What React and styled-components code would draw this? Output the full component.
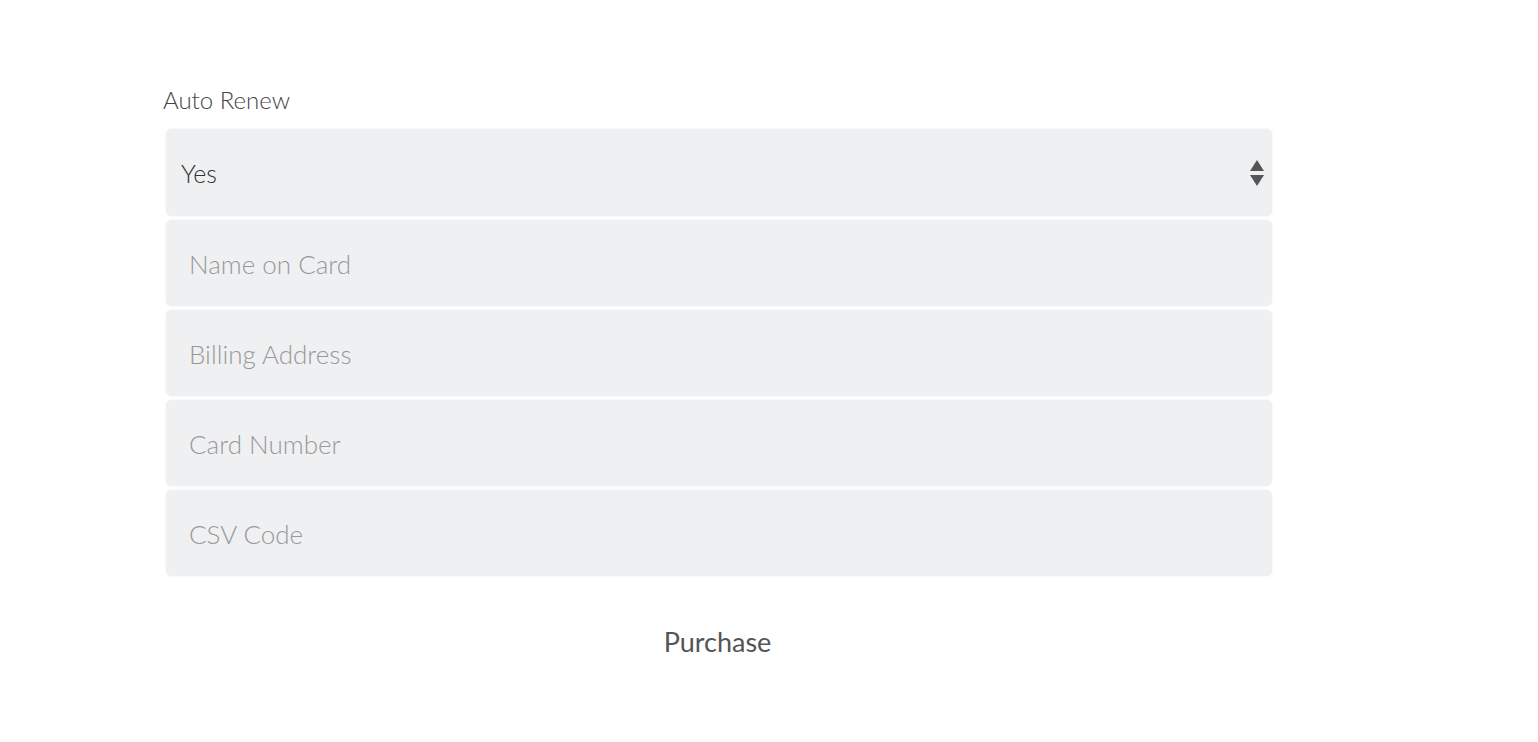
import styled, { createGlobalStyle } from "styled-components";

const GlobalStyle = createGlobalStyle`
  body {
    margin: 0;
    background: #fff;
    font-family: Lato, "Open Sans", sans-serif;
  }
`

const Page = styled.div`
  padding: 84px 0 0 163px;
`

const Form = styled.form`
  width: 1109px;
  display: flex;
  flex-direction: column;
`

const Label = styled.label`
  font-size: 24px;
  font-weight: 300;
  color: #444;
  line-height: 32px;
  margin-bottom: 13px;
`

const Fields = styled.div`
  display: flex;
  flex-direction: column;
  gap: 4px;
  padding-left: 3px;
`

const Box = styled.div`
  height: 87px;
  background: #eff0f2;
  border-radius: 6px;
  box-shadow: 0 0 2px rgba(0, 0, 0, 0.1);
  display: flex;
  align-items: center;
  box-sizing: border-box;
`

const SelectBox = styled(Box)`
  padding: 0 8px 0 15px;
  justify-content: space-between;
  color: #333;
  font-size: 25px;
  font-weight: 300;
`

const Input = styled.input`
  box-sizing: border-box;
  height: 86px;
  border: none;
  outline: none;
  background: #eff0f2;
  border-radius: 6px;
  box-shadow: 0 0 2px rgba(0, 0, 0, 0.1);
  padding: 2px 23px 0;
  font-family: inherit;
  font-size: 26px;
  font-weight: 300;
  color: #333;
  &::placeholder {
    color: #999;
  }
`

const Button = styled.button`
  align-self: center;
  margin-top: 48px;
  background: none;
  border: none;
  font-family: inherit;
  font-size: 27px;
  color: #555;
  cursor: pointer;
`

function Arrows() {
  return (
    <svg width="14" height="26" viewBox="0 0 14 26">
      <polygon points="7,0 14,11 0,11" fill="#555" />
      <polygon points="0,15 14,15 7,26" fill="#555" />
    </svg>
  );
}

export default function App() {
  return (
    <Page>
      <GlobalStyle />
      <Form>
        <Label>Auto Renew</Label>
        <Fields>
          <SelectBox>
            <span>Yes</span>
            <Arrows />
          </SelectBox>
          <Input placeholder="Name on Card" />
          <Input placeholder="Billing Address" />
          <Input placeholder="Card Number" />
          <Input placeholder="CSV Code" />
        </Fields>
        <Button type="button">Purchase</Button>
      </Form>
    </Page>
  );
}
